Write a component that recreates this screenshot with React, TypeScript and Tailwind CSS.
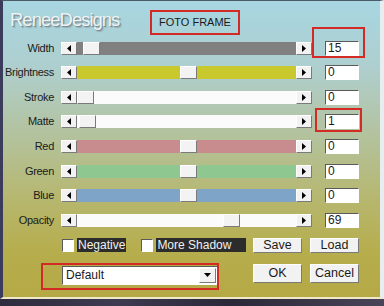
import React from "react";

const rows = [
  { label: "Width", track: "bg-[#808080]", thumb: 6, value: "15", mark: "width" },
  { label: "Brightness", track: "bg-[#c9c92e]", thumb: 103, value: "0" },
  { label: "Stroke", track: "bg-[#fbfbfb]", thumb: 0, value: "0" },
  { label: "Matte", track: "bg-[#fbfbfb]", thumb: 2, value: "1", mark: "matte" },
  { label: "Red", track: "bg-[#c98c8e]", thumb: 103, value: "0" },
  { label: "Green", track: "bg-[#8ec78f]", thumb: 103, value: "0" },
  { label: "Blue", track: "bg-[#7ea5c8]", thumb: 103, value: "0" },
  { label: "Opacity", track: "bg-[#fbfbfb]", thumb: 146, value: "69" },
];

const bevel = "border border-t-white border-l-white border-r-[#7a7a7a] border-b-[#7a7a7a]";
const sunken = "border border-t-[#5a5a5a] border-l-[#5a5a5a] border-r-white border-b-white";

function ArrowBtn({ dir }: { dir: "left" | "right" }) {
  return (
    <div className={`w-[16px] h-full bg-[#f2f2f2] ${bevel} flex items-center justify-center`}>
      <svg width="4" height="7" viewBox="0 0 4 7">
        {dir === "left" ? <path d="M4 0 L0 3.5 L4 7 Z" fill="#000" /> : <path d="M0 0 L4 3.5 L0 7 Z" fill="#000" />}
      </svg>
    </div>
  );
}

export default function App() {
  return (
    <div className="w-[384px] h-[306px] overflow-hidden flex flex-col bg-[#2e2c3e] font-['Liberation_Sans',Arial,sans-serif] text-[#1a1a1a]">
      <div className="h-[299px] flex flex-col border-l-[3px] border-l-[#3b3b5c] border-t border-t-[#4d5a68] border-r-[4px] border-r-[#e6eef0] border-b-2 border-b-[#efe9c8] bg-[linear-gradient(180deg,#a7d6e1_0%,#aecfcf_22%,#b3c4a5_42%,#b6b873_65%,#b6ad4c_85%,#b5a946_100%)]">
        {/* header */}
        <div className="h-[35px] flex items-start">
          <div className="w-[147px] pl-[7px] mt-[7px] text-[18.5px] leading-[24px] tracking-[-1px] text-[#eef3f3] [text-shadow:1px_1px_0_#7b8f96,2px_2px_1px_#98aeb3]">
            ReneeDesigns
          </div>
          <div className="mt-[9px] w-[90px] h-[25px] border-2 border-[#d42a26] flex items-center justify-center text-[11px]">
            FOTO FRAME
          </div>
        </div>

        {/* slider rows */}
        <div className="flex flex-col">
          {rows.map((r) => (
            <div key={r.label} className="h-[24.57px] flex items-center">
              <div className="w-[51px] text-right text-[11px] tracking-[-0.3px] leading-none">{r.label}</div>
              <div className="ml-[7px] w-[251px] h-[13px] flex">
                <ArrowBtn dir="left" />
                <div className={`flex-1 h-full ${r.track} flex`}>
                  <div
                    className={`w-[17px] h-full bg-[#f3f3f3] ${bevel}`}
                    style={{ marginLeft: r.thumb }}
                  />
                </div>
                <ArrowBtn dir="right" />
              </div>
              <div className="relative ml-[13px]">
                <div className={`w-[34px] h-[15px] bg-white ${sunken} text-[12px] leading-[13px] pl-[2px]`}>
                  {r.value}
                </div>
                {r.mark === "width" && (
                  <div className="absolute left-[-13px] top-[-14px] w-[53px] h-[31px] border-2 border-[#d42a26]" />
                )}
                {r.mark === "matte" && (
                  <div className="absolute left-[-10px] top-[-6px] w-[47px] h-[24px] border-2 border-[#d42a26]" />
                )}
              </div>
            </div>
          ))}
        </div>

        {/* bottom controls */}
        <div className="flex mt-[5px]">
          <div className="ml-[59px] w-[191px] flex flex-col">
            <div className="h-[15px] flex items-center text-[12px]">
              <div className={`w-[12px] h-[13px] bg-white ${sunken}`} />
              <div className="ml-[3px] h-[14px] px-[1px] bg-[#2c2c2c] text-[#f0f0f0] leading-[14px]">Negative</div>
              <div className={`ml-[15px] w-[12px] h-[13px] bg-white ${sunken}`} />
              <div className="ml-[3px] h-[14px] w-[90px] pl-[1px] bg-[#2c2c2c] text-[#f0f0f0] leading-[14px]">More Shadow</div>
            </div>
            <div className="relative mt-[13px]">
              <div className={`w-[156px] h-[19px] bg-white ${sunken} flex items-center text-[12px]`}>
                <span className="ml-[3px] flex-1">Default</span>
                <div className={`w-[17px] h-[15px] mr-[1px] bg-[#f2f2f2] ${bevel} flex items-center justify-center`}>
                  <svg width="7" height="4" viewBox="0 0 7 4">
                    <path d="M0 0 L7 0 L3.5 4 Z" fill="#000" />
                  </svg>
                </div>
              </div>
              <div className="absolute left-[-21px] top-[-3px] w-[178px] h-[27px] border-2 border-[#d42a26]" />
            </div>
          </div>
          <div className="grid grid-cols-[49px_49px] gap-x-[8px] gap-y-[9px] text-[12.5px]">
            <div className={`h-[15px] bg-[#f2f2f2] ${bevel} flex items-center justify-center`}>Save</div>
            <div className={`h-[15px] bg-[#f2f2f2] ${bevel} flex items-center justify-center`}>Load</div>
            <div className={`h-[19px] bg-[#f2f2f2] ${bevel} flex items-center justify-center`}>OK</div>
            <div className={`h-[19px] bg-[#f2f2f2] ${bevel} flex items-center justify-center`}>Cancel</div>
          </div>
        </div>
      </div>
      <div className="flex-1 bg-[linear-gradient(90deg,#2d2b3c,#3e3a52_30%,#2a2838_60%,#4a4458)]" />
    </div>
  );
}
